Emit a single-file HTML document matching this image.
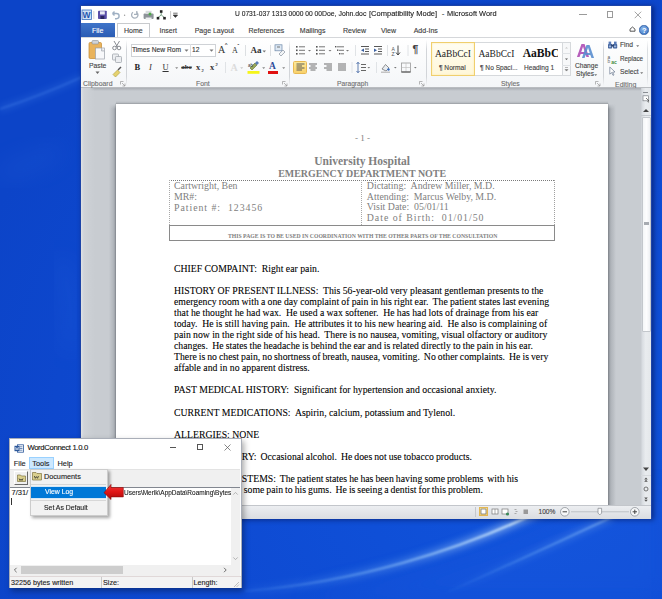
<!DOCTYPE html>
<html><head><meta charset="utf-8">
<style>
*{margin:0;padding:0;box-sizing:border-box}
html,body{width:662px;height:599px;overflow:hidden}
body{position:relative;background:#0a3fc4;font-family:"Liberation Sans",sans-serif}
.a{position:absolute}
.t{position:absolute;white-space:pre;line-height:1}
.ui{font-family:"Liberation Sans",sans-serif;color:#3c3c3c;-webkit-text-stroke:0.12px currentColor}
.s{font-family:"Liberation Serif",serif;font-size:9.75px;color:#000;-webkit-text-stroke:0.15px rgba(0,0,0,.6)}
.h{font-family:"Liberation Serif",serif;color:#808080}
.ser{font-family:"Liberation Serif",serif}
</style></head>
<body>
<!-- desktop streaks -->
<svg class="a" style="left:0;top:0" width="662" height="599">
 <defs>
  <radialGradient id="bg1" cx="0.8" cy="0.75" r="0.9"><stop offset="0" stop-color="#1054dc"/><stop offset="0.6" stop-color="#0e4ad2"/><stop offset="1" stop-color="#0c44c8"/></radialGradient>
  <linearGradient id="sg1" gradientUnits="userSpaceOnUse" x1="240" y1="0" x2="545" y2="0"><stop offset="0" stop-color="#7fc0ff" stop-opacity="0.1"/><stop offset="0.5" stop-color="#a8d8ff" stop-opacity="0.55"/><stop offset="0.85" stop-color="#d8f0ff" stop-opacity="0.95"/><stop offset="1" stop-color="#d8f0ff" stop-opacity="1"/></linearGradient>
  <linearGradient id="sg2" gradientUnits="userSpaceOnUse" x1="440" y1="0" x2="610" y2="0"><stop offset="0" stop-color="#7fc0ff" stop-opacity="0"/><stop offset="0.5" stop-color="#8cc8ff" stop-opacity="0.4"/><stop offset="1" stop-color="#b0dcff" stop-opacity="0.65"/></linearGradient>
  <filter id="bl3" x="-20%" y="-50%" width="140%" height="200%"><feGaussianBlur stdDeviation="3.5"/></filter>
  <filter id="bl1" x="-20%" y="-50%" width="140%" height="200%"><feGaussianBlur stdDeviation="1.1"/></filter>
  <filter id="bl6" x="-50%" y="-50%" width="200%" height="200%"><feGaussianBlur stdDeviation="12"/></filter>
 </defs>
 <rect width="662" height="599" fill="url(#bg1)"/>
 <path d="M300 599 Q 450 570 560 520 L 662 490 L 662 599 Z" fill="#1a5ae0" opacity="0.35" filter="url(#bl6)"/>
 <path d="M245 591 C 350 583, 460 552, 550 506" stroke="url(#sg1)" stroke-width="8" fill="none" opacity="0.45" filter="url(#bl3)"/>
 <path d="M245 591 C 350 583, 460 552, 550 506" stroke="url(#sg1)" stroke-width="2.2" fill="none" opacity="0.9" filter="url(#bl1)"/>
 <path d="M428 601 Q 520 560 612 517" stroke="url(#sg2)" stroke-width="6" fill="none" opacity="0.4" filter="url(#bl3)"/>
 <path d="M428 601 Q 520 560 612 517" stroke="url(#sg2)" stroke-width="1.6" fill="none" opacity="0.85" filter="url(#bl1)"/>
 <path d="M0 109 Q 40 96 82 77" stroke="#5a9af5" stroke-width="4" fill="none" opacity="0.3" filter="url(#bl3)"/>
 <path d="M0 109 Q 40 96 82 77" stroke="#6aa8ff" stroke-width="1.2" fill="none" opacity="0.35" filter="url(#bl1)"/>
 <path d="M0 175 Q 30 165 60 150" stroke="#3a78e8" stroke-width="14" fill="none" opacity="0.18" filter="url(#bl6)"/>
 <path d="M60 260 Q 75 300 70 350" stroke="#3a78e8" stroke-width="10" fill="none" opacity="0.25" filter="url(#bl6)"/>
</svg>
<!-- WORD WINDOW -->
<div class="a" style="left:79.6px;top:5px;width:572px;height:513.5px;background:#fff;border:1px solid #1d44a8;box-shadow:2px 1px 5px rgba(0,0,40,.45)"></div>
<!-- title -->
<div class="t ui" style="left:234.6px;top:10.3px;font-size:8px;color:#222;transform-origin:0 0;transform:scaleX(0.835)">U 0731-037 1313 0000 00 00</div>
<div class="t ui" style="left:322.4px;top:10.3px;font-size:8px;color:#222;transform-origin:0 0;transform:scaleX(0.86)">Doe, John.doc</div>
<div class="t ui" style="left:369.3px;top:10.3px;font-size:8px;color:#222;transform-origin:0 0;transform:scaleX(0.94)">[Compatibility Mode]</div>
<div class="t ui" style="left:441.8px;top:10.3px;font-size:8px;color:#222;transform-origin:0 0;">-</div>
<div class="t ui" style="left:447px;top:10.3px;font-size:8px;color:#222;transform-origin:0 0;transform:scaleX(0.925)">Microsoft Word</div>
<!-- tabs -->
<div class="a" style="left:81px;top:23.3px;width:33.5px;height:13.7px;background:linear-gradient(#3f74c9,#2b5cb4)"></div>
<div class="t ui" style="left:92px;top:26.5px;font-size:7px;color:#fff">File</div>
<div class="a" style="left:117.4px;top:23px;width:33px;height:15px;background:#fff;border:1px solid #c8cacd;border-bottom:none"></div>
<div class="t ui" style="left:124px;top:26.5px;font-size:7px">Home</div>
<div class="t ui" style="left:159.5px;top:26.5px;font-size:7px">Insert</div>
<div class="t ui" style="left:194.7px;top:26.5px;font-size:7px">Page Layout</div>
<div class="t ui" style="left:248.5px;top:26.5px;font-size:7px">References</div>
<div class="t ui" style="left:299.8px;top:26.5px;font-size:7px">Mailings</div>
<div class="t ui" style="left:343px;top:26.5px;font-size:7px">Review</div>
<div class="t ui" style="left:381px;top:26.5px;font-size:7px">View</div>
<div class="t ui" style="left:413.7px;top:26.5px;font-size:7px">Add-Ins</div>
<!-- ribbon -->
<div class="a" style="left:81px;top:37px;width:570px;height:51px;background:linear-gradient(#ffffff,#f4f6f8);border-top:1px solid #d5d7da;border-bottom:1px solid #b9bcc0"></div>
<!-- RIBBON CONTENT -->
<!-- QAT -->
<svg class="a" style="left:81px;top:9px" width="100" height="12">
 <rect x="1" y="1" width="9.5" height="9.5" fill="#cfe0f5" stroke="#3a6fbf" stroke-width="0.8"/>
 <text x="1.6" y="9.3" font-family="Liberation Sans" font-weight="bold" font-size="8.5" fill="#1f56b0">W</text>
 <line x1="12.8" y1="2" x2="12.8" y2="10" stroke="#c9c9c9" stroke-width="0.8"/>
 <rect x="17" y="1.8" width="8.8" height="8.2" rx="0.8" fill="#5a4fa8"/>
 <rect x="19" y="2.3" width="4.8" height="3.2" fill="#e9e9f5"/>
 <rect x="19.5" y="7" width="3.8" height="3" fill="#2a2460"/>
 <path d="M31.5 4.5 h4 a2.6 2.6 0 0 1 0 5.2 h-1.5 M31.5 4.5 l2 -2 M31.5 4.5 l2 2" fill="none" stroke="#9fb0c3" stroke-width="1.4"/>
 <circle cx="43.6" cy="6.2" r="0.7" fill="#9a9a9a"/>
 <path d="M52 3.3 a3.2 3.2 0 1 0 3.2 -0.2 M55.8 2 v3.3 h-2.8" fill="none" stroke="#a8b2bd" stroke-width="1.3"/>
 <rect x="62.6" y="4.5" width="10" height="5.5" rx="1" fill="#8d9399"/>
 <rect x="64.6" y="1.8" width="6" height="3.2" fill="#d8dcde"/>
 <rect x="64.6" y="8.5" width="6" height="2.5" fill="#eef0f1"/>
 <circle cx="69" cy="5" r="1.5" fill="#4fa84a"/>
 <path d="M80.2 3 V6 M77 8.5 L80.2 6 L83.5 8.5" stroke="#6f9a7a" stroke-width="0.9" fill="none"/>
 <rect x="78.9" y="1.2" width="2.6" height="2.6" fill="#222"/>
 <rect x="75.7" y="7.9" width="2.6" height="2.6" fill="#222"/>
 <rect x="82.2" y="7.9" width="2.6" height="2.6" fill="#222"/>
 <line x1="89.6" y1="2" x2="89.6" y2="10" stroke="#b9b9b9" stroke-width="0.8"/>
 <path d="M92.2 4.2 h4.4 M92.2 6 l2.2 2.4 l2.2 -2.4 z" stroke="#333" stroke-width="0.7" fill="#333"/>
</svg>
<!-- window controls -->
<div class="a" style="left:579px;top:14.3px;width:8px;height:0.9px;background:#9a9a9a"></div>
<div class="a" style="left:606.5px;top:11.3px;width:6.8px;height:6.8px;border:0.9px solid #9a9a9a"></div>
<svg class="a" style="left:633.5px;top:11px" width="8" height="8"><path d="M0.7 0.7 L7.2 7.2 M7.2 0.7 L0.7 7.2" stroke="#9a9a9a" stroke-width="0.9"/></svg>
<!-- ribbon min + help -->
<svg class="a" style="left:628.5px;top:26px" width="7" height="6"><path d="M1 5.2 v-2 l2.5 -2.2 l2.5 2.2 v2 z" fill="none" stroke="#444" stroke-width="0.9"/></svg>
<div class="a" style="left:639.4px;top:25.2px;width:9.4px;height:9.4px;border-radius:50%;background:radial-gradient(circle at 40% 35%,#8ab8ec,#3a72c2);border:0.5px solid #2d5fa8"></div>
<div class="t" style="left:642.1px;top:26.5px;font-size:7.4px;font-weight:bold;color:#fff;font-family:'Liberation Sans'">?</div>

<!-- ===== Clipboard group ===== -->
<svg class="a" style="left:87px;top:39px" width="20" height="22">
 <rect x="2" y="3.5" width="12.5" height="16" rx="1.2" fill="#e9b35c" stroke="#c48a2f" stroke-width="0.7"/>
 <rect x="5" y="1.5" width="6.5" height="3.5" rx="1" fill="#cfd3d8" stroke="#8a8f96" stroke-width="0.6"/>
 <rect x="8.5" y="9" width="9" height="11" fill="#f7f8fa" stroke="#9aa0a8" stroke-width="0.7"/>
 <path d="M14.5 9 v3 h3" fill="#dde1e6" stroke="#9aa0a8" stroke-width="0.6"/>
</svg>
<div class="t ui" style="left:89px;top:63px;font-size:6.8px;color:#444">Paste</div>
<svg class="a" style="left:94.5px;top:70.5px" width="5" height="4"><path d="M0.5 0.5 h4 l-2 2.5 z" fill="#666"/></svg>
<svg class="a" style="left:111px;top:40px" width="12" height="38">
 <path d="M3 1 l3.5 6 M8.5 1 l-3.5 6" stroke="#7c8087" stroke-width="0.9" fill="none"/>
 <circle cx="3.5" cy="8" r="1.8" fill="none" stroke="#7c8087" stroke-width="0.9"/>
 <circle cx="8" cy="8" r="1.8" fill="none" stroke="#7c8087" stroke-width="0.9"/>
 <rect x="1.5" y="14" width="6" height="6" rx="0.8" fill="#eceef1" stroke="#a2a7ad" stroke-width="0.8"/>
 <rect x="4.5" y="16.5" width="6" height="6" rx="0.8" fill="#eceef1" stroke="#a2a7ad" stroke-width="0.8"/>
 <path d="M2 34.5 l4.5 -4.5 l2.5 2.5 l-4.5 4.5 z" fill="#e6d26e" stroke="#a89a3a" stroke-width="0.6"/>
 <path d="M7 30 l3 -3" stroke="#555" stroke-width="1.4"/>
</svg>
<div class="t ui" style="left:83px;top:81.2px;font-size:6.9px;color:#707070">Clipboard</div>
<svg class="a" style="left:119.5px;top:81px" width="6" height="6"><path d="M0.5 0.5 h3 M0.5 0.5 v3 M2 2 l3 3 M5 2.5 v2.5 h-2.5" stroke="#8a8a8a" stroke-width="0.6" fill="none"/></svg>
<div class="a" style="left:126px;top:40px;width:1px;height:46px;background:linear-gradient(rgba(200,203,207,0),#d2d5d9 20%,#d2d5d9 80%,rgba(200,203,207,0))"></div>

<!-- ===== Font group ===== -->
<div class="a" style="left:130.5px;top:43.5px;width:85px;height:13px;background:#fff;border:1px solid #cfd2d6"></div>
<div class="a" style="left:189.5px;top:44px;width:1px;height:12px;background:#dcdfe2"></div>
<div class="t ui" style="left:132px;top:46.6px;font-size:6.66px;color:#333">Times New Rom</div>
<svg class="a" style="left:183.5px;top:49px" width="5" height="4"><path d="M0.5 0.5 h4 l-2 2.3 z" fill="#777"/></svg>
<div class="t ui" style="left:192px;top:46.6px;font-size:6.66px;color:#333">12</div>
<svg class="a" style="left:208.5px;top:49px" width="5" height="4"><path d="M0.5 0.5 h4 l-2 2.3 z" fill="#777"/></svg>
<div class="t ser" style="left:218px;top:44.5px;font-size:10px;color:#333">A</div>
<div class="t ui" style="left:225px;top:43px;font-size:5px;color:#333">^</div>
<div class="t ser" style="left:232px;top:46.5px;font-size:8px;color:#333">A</div>
<div class="t ui" style="left:237.5px;top:44px;font-size:5px;color:#333">ˇ</div>
<div class="a" style="left:245px;top:45px;width:1px;height:11px;background:#dcdfe2"></div>
<div class="t ser" style="left:250.5px;top:45.6px;font-size:9px;color:#333;font-weight:bold">Aa</div>
<svg class="a" style="left:261.5px;top:49.5px" width="5" height="4"><path d="M0.5 0.5 h3.5 l-1.75 2 z" fill="#777"/></svg>
<div class="a" style="left:269.5px;top:45px;width:1px;height:11px;background:#dcdfe2"></div>
<svg class="a" style="left:274px;top:44px" width="12" height="12">
 <rect x="1" y="0.8" width="7" height="6" fill="#dde8f3" stroke="#6d88a8" stroke-width="0.7"/>
 <path d="M3 3 h3" stroke="#555" stroke-width="0.8"/>
 <path d="M5 10 l4 -4 l2 2 l-4 4 z" fill="#f2f4f6" stroke="#8892a0" stroke-width="0.7"/>
</svg>
<!-- row 2 -->
<div class="t ser" style="left:134.5px;top:63px;font-size:8.5px;font-weight:bold;color:#222">B</div>
<div class="t ser" style="left:149px;top:63px;font-size:8.5px;font-style:italic;color:#333">I</div>
<div class="t ser" style="left:162.5px;top:63px;font-size:8.5px;color:#333;text-decoration:underline">U</div>
<svg class="a" style="left:174.5px;top:67px" width="4" height="3"><path d="M0.2 0.3 h3 l-1.5 1.8 z" fill="#888"/></svg>
<div class="t ser" style="left:181.3px;top:64.3px;font-size:7px;color:#333;text-decoration:line-through;font-weight:bold">abc</div>
<div class="t ser" style="left:196px;top:63px;font-size:8.5px;color:#333;font-weight:bold">x</div>
<div class="t ui" style="left:201.5px;top:68.5px;font-size:4px;color:#333">2</div>
<div class="t ser" style="left:210px;top:63px;font-size:8.5px;color:#333;font-weight:bold">x</div>
<div class="t ui" style="left:215.5px;top:62.5px;font-size:4px;color:#333">2</div>
<div class="a" style="left:225px;top:62px;width:1px;height:11px;background:#e0e3e6"></div>
<div class="t ser" style="left:230.5px;top:62.5px;font-size:10px;color:#dcdcdc;font-weight:bold">A</div>
<svg class="a" style="left:240px;top:67px" width="4" height="3"><path d="M0.2 0.3 h3 l-1.5 1.8 z" fill="#c8c8c8"/></svg>
<svg class="a" style="left:247px;top:60px" width="14" height="15">
 <path d="M3 8 l5 -5 l2 2 l-5 5 z" fill="#9aa75a" stroke="#5a6b2a" stroke-width="0.6"/>
 <path d="M8 3 l2 -2 l2 2 l-2 2" fill="#5a7db8"/>
 <text x="1" y="7" font-size="4.5" font-family="Liberation Sans" fill="#333">ab</text>
 <rect x="0.5" y="11" width="12" height="2.8" fill="#f5f51a"/>
</svg>
<svg class="a" style="left:262px;top:67px" width="4" height="3"><path d="M0.2 0.3 h3 l-1.5 1.8 z" fill="#888"/></svg>
<div class="t ser" style="left:269px;top:61.5px;font-size:9.5px;color:#2c4a9a;font-weight:bold">A</div>
<div class="a" style="left:268px;top:71px;width:10px;height:2.5px;background:#e01010"></div>
<svg class="a" style="left:281.5px;top:67px" width="4" height="3"><path d="M0.2 0.3 h3 l-1.5 1.8 z" fill="#888"/></svg>
<div class="t ui" style="left:196px;top:81.2px;font-size:6.9px;color:#707070">Font</div>
<svg class="a" style="left:282px;top:81px" width="6" height="6"><path d="M0.5 0.5 h3 M0.5 0.5 v3 M2 2 l3 3 M5 2.5 v2.5 h-2.5" stroke="#8a8a8a" stroke-width="0.6" fill="none"/></svg>
<div class="a" style="left:289px;top:40px;width:1px;height:46px;background:linear-gradient(rgba(200,203,207,0),#d2d5d9 20%,#d2d5d9 80%,rgba(200,203,207,0))"></div>

<!-- ===== Paragraph group ===== -->
<svg class="a" style="left:294px;top:44px" width="135" height="14">
 <g fill="#555"><rect x="2" y="2" width="1.6" height="1.6"/><rect x="2" y="5.5" width="1.6" height="1.6"/><rect x="2" y="9" width="1.6" height="1.6"/></g>
 <g stroke="#666" stroke-width="0.9"><path d="M5 2.8 h6 M5 6.3 h6 M5 9.8 h6"/></g>
 <path d="M14 6 h3 l-1.5 1.6 z" fill="#777"/>
 <g fill="#555"><rect x="22" y="2" width="1.6" height="1.6"/><rect x="22" y="5.5" width="1.6" height="1.6"/><rect x="22" y="9" width="1.6" height="1.6"/></g>
 <g stroke="#666" stroke-width="0.9"><path d="M25 2.8 h6 M25 6.3 h6 M25 9.8 h6"/></g>
 <path d="M34.5 6 h3 l-1.5 1.6 z" fill="#777"/>
 <g stroke="#666" stroke-width="0.9"><path d="M43 2.8 h7 M45 6.3 h5 M47 9.8 h3"/></g>
 <g fill="#555"><rect x="41" y="2" width="1.4" height="1.4"/><rect x="43" y="5.5" width="1.4" height="1.4"/><rect x="45" y="9" width="1.4" height="1.4"/></g>
 <path d="M52 6 h3 l-1.5 1.6 z" fill="#777"/>
 <line x1="61.5" y1="1" x2="61.5" y2="12" stroke="#dde0e3" stroke-width="0.9"/>
 <g stroke="#444" stroke-width="0.9"><path d="M67 2.5 h8 M71 5 h4 M71 7.5 h4 M67 10 h8"/></g>
 <path d="M70 4.5 l-3 1.8 l3 1.8 z" fill="#3a5fa0"/>
 <g stroke="#444" stroke-width="0.9"><path d="M80 2.5 h8 M84 5 h4 M84 7.5 h4 M80 10 h8"/></g>
 <path d="M80 4.5 l3 1.8 l-3 1.8 z" fill="#3a5fa0"/>
 <line x1="93.5" y1="1" x2="93.5" y2="12" stroke="#dde0e3" stroke-width="0.9"/>
 <text x="97.5" y="7" font-size="5" font-family="Liberation Sans" fill="#555">A</text>
 <text x="97.5" y="12.3" font-size="5" font-family="Liberation Sans" fill="#555">Z</text>
 <path d="M104 1.5 v9 M102 8.5 l2 2.5 l2 -2.5" stroke="#333" stroke-width="0.9" fill="none"/>
 <line x1="114" y1="1" x2="114" y2="12" stroke="#dde0e3" stroke-width="0.9"/>
 <text x="118.5" y="9.3" font-size="10.5" font-weight="bold" font-family="Liberation Sans" fill="#444">¶</text>
</svg>
<div class="a" style="left:292.5px;top:61px;width:14px;height:12.5px;background:linear-gradient(#fde99a,#f8d16b);border:1px solid #e8b952;border-radius:1.5px"></div>
<svg class="a" style="left:294px;top:60px" width="135" height="15">
 <g stroke="#555" stroke-width="0.95"><path d="M2.5 4 h8 M2.5 6 h5.5 M2.5 8 h8 M2.5 10 h5.5"/></g>
 <g stroke="#666" stroke-width="0.95"><path d="M15 4 h8 M16.5 6 h5 M15 8 h8 M16.5 10 h5"/></g>
 <g stroke="#666" stroke-width="0.95"><path d="M30 4 h8 M32.5 6 h5.5 M30 8 h8 M32.5 10 h5.5"/></g>
 <g stroke="#666" stroke-width="0.95"><path d="M44 4 h8 M44 6 h8 M44 8 h8 M44 10 h8"/></g>
 <line x1="58" y1="2" x2="58" y2="13" stroke="#dde0e3" stroke-width="0.9"/>
 <path d="M64 2.5 v10 M62.5 4 l1.5 -1.8 l1.5 1.8 M62.5 11 l1.5 1.8 l1.5 -1.8" stroke="#3a5fa0" stroke-width="0.8" fill="none"/>
 <g stroke="#555" stroke-width="0.9"><path d="M67 4.5 h5 M67 7.5 h5 M67 10.5 h5"/></g>
 <path d="M73.5 7 h2.6 l-1.3 1.5 z" fill="#777"/>
 <line x1="82.5" y1="2" x2="82.5" y2="13" stroke="#dde0e3" stroke-width="0.9"/>
 <path d="M88 9 l3.5 -4.5 l3.5 3.5 l-3 3 z" fill="#e8ecf0" stroke="#666" stroke-width="0.7"/>
 <circle cx="94.5" cy="9.5" r="1.2" fill="#3a6fbf"/>
 <rect x="87" y="11.5" width="9" height="1.5" fill="#c4c4c4"/>
 <path d="M100 7 h2.6 l-1.3 1.5 z" fill="#777"/>
 <rect x="107.5" y="3" width="9" height="9" fill="none" stroke="#9a9a9a" stroke-width="0.8"/>
 <path d="M112 3 v9 M107.5 7.5 h9" stroke="#b9b9b9" stroke-width="0.6"/>
 <path d="M107.5 12 h9" stroke="#444" stroke-width="1"/>
 <path d="M120 7 h2.6 l-1.3 1.5 z" fill="#777"/>
</svg>
<div class="t ui" style="left:337px;top:81.2px;font-size:6.7px;color:#707070">Paragraph</div>
<svg class="a" style="left:419px;top:81px" width="6" height="6"><path d="M0.5 0.5 h3 M0.5 0.5 v3 M2 2 l3 3 M5 2.5 v2.5 h-2.5" stroke="#8a8a8a" stroke-width="0.6" fill="none"/></svg>
<div class="a" style="left:426px;top:40px;width:1px;height:46px;background:linear-gradient(rgba(200,203,207,0),#d2d5d9 20%,#d2d5d9 80%,rgba(200,203,207,0))"></div>

<!-- ===== Styles group ===== -->
<div class="a" style="left:431px;top:41.5px;width:140px;height:34.5px;background:#fff;border:1px solid #d6d9dc"></div>
<div class="a" style="left:431px;top:41.5px;width:43.6px;height:34.5px;background:linear-gradient(#fffdf2,#fff7d9);border:1.5px solid #f0cf6e;box-shadow:inset 0 0 2px #fbe7a6"></div>
<div class="t ser" style="left:435px;top:50.2px;font-size:9.5px;color:#222">AaBbCcI</div>
<div class="t ui" style="left:439px;top:65.2px;font-size:6.6px;color:#444">¶ Normal</div>
<div class="t ser" style="left:478.5px;top:50.2px;font-size:9.5px;color:#222">AaBbCcI</div>
<div class="t ui" style="left:480px;top:65.2px;font-size:6.6px;color:#444">¶ No Spaci...</div>
<div class="a" style="left:522px;top:46px;width:35.5px;height:14px;overflow:hidden"><div class="t ser" style="left:0.7px;top:1.5px;font-size:11.6px;color:#111;font-weight:bold">AaBbC</div></div>
<div class="t ui" style="left:524px;top:65.2px;font-size:6.6px;color:#444">Heading 1</div>
<div class="a" style="left:562px;top:41.5px;width:9px;height:34.5px;background:#f7f8f9;border:1px solid #d6d9dc"></div>
<div class="a" style="left:562px;top:53px;width:9px;height:1px;background:#dfe2e5"></div>
<div class="a" style="left:562px;top:64.5px;width:9px;height:1px;background:#dfe2e5"></div>
<svg class="a" style="left:562px;top:42px" width="9" height="34">
 <path d="M3 6.5 h3 l-1.5 -1.6 z" fill="#c8c8c8"/>
 <path d="M3 16.5 h3 l-1.5 1.6 z" fill="#555"/>
 <path d="M3 25.5 h3 M3 27.5 h3 l-1.5 1.6 z" fill="#777" stroke="#777" stroke-width="0.5"/>
</svg>
<svg class="a" style="left:575px;top:39px" width="24" height="21">
 <text x="1.5" y="17.5" font-size="18" font-family="Liberation Sans" font-weight="bold" fill="#b356b8" opacity="0.95">A</text>
 <text x="6.5" y="19" font-size="18" font-family="Liberation Sans" font-weight="bold" fill="#5b8fd0" opacity="0.9">A</text>
</svg>
<div class="t ui" style="left:575px;top:62.8px;font-size:6.6px;color:#444">Change</div>
<div class="t ui" style="left:576px;top:71.3px;font-size:6.6px;color:#444">Styles</div>
<svg class="a" style="left:594px;top:74px" width="4" height="3"><path d="M0.2 0.3 h3 l-1.5 1.8 z" fill="#777"/></svg>
<div class="t ui" style="left:501px;top:81.2px;font-size:6.9px;color:#707070">Styles</div>
<svg class="a" style="left:595px;top:81px" width="6" height="6"><path d="M0.5 0.5 h3 M0.5 0.5 v3 M2 2 l3 3 M5 2.5 v2.5 h-2.5" stroke="#8a8a8a" stroke-width="0.6" fill="none"/></svg>
<div class="a" style="left:602.5px;top:40px;width:1px;height:46px;background:linear-gradient(rgba(200,203,207,0),#d2d5d9 20%,#d2d5d9 80%,rgba(200,203,207,0))"></div>

<!-- ===== Editing group ===== -->
<svg class="a" style="left:607px;top:40px" width="12" height="37">
 <rect x="1" y="4" width="4.2" height="4.6" rx="0.8" fill="#3e5f99"/>
 <rect x="6" y="4" width="4.2" height="4.6" rx="0.8" fill="#3e5f99"/>
 <rect x="1.6" y="1.6" width="2.6" height="3" fill="#5a7cb8"/>
 <rect x="7" y="1.6" width="2.6" height="3" fill="#5a7cb8"/>
 <rect x="4" y="4.6" width="3.2" height="2" fill="#27406e"/>
 <rect x="1.8" y="5.5" width="2.4" height="1.8" fill="#9fb8df"/>
 <rect x="6.9" y="5.5" width="2.4" height="1.8" fill="#9fb8df"/>
 <text x="0.6" y="19" font-size="4.8" font-family="Liberation Sans" fill="#555">a</text>
 <text x="0.6" y="23" font-size="4.8" font-family="Liberation Sans" fill="#666">b</text>
 <text x="4.2" y="23.5" font-size="5" font-family="Liberation Sans" font-weight="bold" fill="#3c8a3a">ac</text>
 <path d="M2.8 27 v7.2 l1.8 -1.6 l1.4 2.8 l1 -0.5 l-1.4 -2.7 l2.4 -0.2 z" fill="#fff" stroke="#6a7a90" stroke-width="0.7"/>
</svg>
<div class="a" style="left:646.5px;top:40px;width:1px;height:46px;background:linear-gradient(rgba(200,203,207,0),#dcdfe2 20%,#dcdfe2 80%,rgba(200,203,207,0))"></div>
<div class="t ui" style="left:620px;top:41.8px;font-size:6.7px;color:#444">Find</div>
<svg class="a" style="left:635.5px;top:44.5px" width="4" height="3"><path d="M0.2 0.3 h3 l-1.5 1.8 z" fill="#777"/></svg>
<div class="t ui" style="left:620px;top:56.3px;font-size:6.3px;color:#444">Replace</div>
<div class="t ui" style="left:620px;top:69.2px;font-size:6.7px;color:#444">Select</div>
<svg class="a" style="left:640px;top:72px" width="4" height="3"><path d="M0.2 0.3 h3 l-1.5 1.8 z" fill="#777"/></svg>
<div class="t ui" style="left:615px;top:81.2px;font-size:7px;color:#707070">Editing</div>

<!-- /RIBBON CONTENT -->
<!-- doc area -->
<div class="a" style="left:81px;top:88px;width:560px;height:417px;background:#c8ccd1"></div>
<div class="a" style="left:81px;top:88px;width:560px;height:3px;background:linear-gradient(#a9adb3,rgba(200,204,209,0))"></div>
<div class="a" style="left:80.6px;top:88px;width:14px;height:417px;background:linear-gradient(90deg,#dfe2e6,#d0d3d8 20%,#cbcfd4 60%,rgba(200,204,209,0))"></div>

<div class="a" style="left:109px;top:104px;width:7px;height:401px;background:linear-gradient(90deg,rgba(150,155,162,0),rgba(150,155,162,.5) 70%,rgba(120,125,132,.8));-webkit-mask-image:linear-gradient(rgba(0,0,0,0),#000 5px)"></div>
<div class="a" style="left:608px;top:104px;width:8px;height:401px;background:linear-gradient(90deg,rgba(120,125,132,.85),rgba(150,155,162,.5) 35%,rgba(150,155,162,0));-webkit-mask-image:linear-gradient(rgba(0,0,0,0),#000 5px)"></div>
<div class="a" style="left:116px;top:101px;width:492px;height:3px;background:linear-gradient(rgba(150,155,162,0),rgba(140,145,152,.5))"></div>
<div class="a" style="left:116px;top:104px;width:492px;height:401px;background:#fff;box-shadow:0 0 0 0.5px rgba(120,125,130,.45)"></div>
<!-- v scrollbar -->
<div class="a" style="left:640.5px;top:88px;width:10.5px;height:417px;background:linear-gradient(90deg,#d7dbe0,#e9ecef 40%,#e4e7ea);border-left:1px solid #d0d4d9"></div>
<div class="a" style="left:643px;top:92.2px;width:5px;height:1px;background:#8a8e94"></div>
<svg class="a" style="left:641.5px;top:95px" width="9" height="8"><rect x="1" y="0.8" width="5.5" height="5" fill="#fff" stroke="#7a7f86" stroke-width="0.7"/><path d="M4 3 l3 3 l-1.2 0.2 l0.6 1.3" stroke="#444" stroke-width="0.7" fill="none"/></svg>
<svg class="a" style="left:642px;top:108px" width="8" height="5"><path d="M1 4 h6 l-3 -3 z" fill="#444"/></svg>
<div class="a" style="left:641px;top:115px;width:10px;height:1px;background:#c5c9ce"></div>
<div class="a" style="left:641.5px;top:116.5px;width:9px;height:215.5px;background:linear-gradient(90deg,#f4f6f8,#fdfdfe 50%,#eef0f3);border:1px solid #c3c7cc;border-radius:1px"></div>
<div class="a" style="left:643.5px;top:222px;width:5px;height:3px;background:#a7abb1"></div>
<svg class="a" style="left:642px;top:466px" width="8" height="38">
 <path d="M1 1.5 h6 l-3 3.5 z" fill="#444"/>
 <path d="M2.2 13.5 h3.6 l-1.8 -2 z M2.2 15.8 h3.6 l-1.8 -2 z" fill="#555"/>
 <circle cx="4" cy="23" r="2" fill="none" stroke="#555" stroke-width="0.8"/>
 <path d="M2.2 31.5 h3.6 l-1.8 2 z M2.2 33.8 h3.6 l-1.8 2 z" fill="#555"/>
</svg>
<div class="a" style="left:641px;top:474.5px;width:10px;height:1px;background:#d6d9dd"></div>
<!-- status bar -->
<div class="a" style="left:80.6px;top:505px;width:570px;height:13.5px;background:linear-gradient(#eceef1,#dadde1);border-top:1px solid #c3c6cb"></div>
<div class="a" style="left:474.5px;top:507px;width:1px;height:10px;background:#c4c7cb"></div>
<div class="a" style="left:478.8px;top:507.3px;width:9.6px;height:9px;background:linear-gradient(#fde9a0,#f7d57a);border:1px solid #e3b652"></div>
<svg class="a" style="left:478px;top:506px" width="60" height="12">
 <rect x="3" y="3" width="5" height="5" fill="#fff" stroke="#666" stroke-width="0.7"/>
 <rect x="14" y="3" width="6" height="5" fill="#fff" stroke="#777" stroke-width="0.7"/><path d="M17 3 v5" stroke="#777" stroke-width="0.6"/>
 <rect x="24" y="3" width="6" height="5" fill="#fff" stroke="#777" stroke-width="0.7"/><circle cx="29.5" cy="8" r="1.6" fill="#3c8a5a"/>
 <path d="M36.5 3.5 h2 M37.5 5.5 h2 M36.5 7.5 h2" stroke="#999" stroke-width="0.8"/>
 <rect x="45.5" y="3.5" width="4.5" height="4.5" fill="#999"/>
</svg>
<div class="t ui" style="left:538.5px;top:508.5px;font-size:6.6px;color:#444">100%</div>
<svg class="a" style="left:559px;top:506px" width="82" height="12">
 <circle cx="5.8" cy="5.8" r="4.3" fill="#f7f8f9" stroke="#8d9298" stroke-width="0.8"/>
 <path d="M3.6 5.8 h4.4" stroke="#444" stroke-width="1"/>
 <path d="M12 5.8 h58" stroke="#b9bdc2" stroke-width="0.9"/>
 <path d="M39 2.3 h3.6 v4.8 l-1.8 1.8 l-1.8 -1.8 z" fill="#fafbfc" stroke="#7f848a" stroke-width="0.7"/>
 <circle cx="75.8" cy="5.8" r="4.3" fill="#f7f8f9" stroke="#8d9298" stroke-width="0.8"/>
 <path d="M73.6 5.8 h4.4 M75.8 3.6 v4.4" stroke="#444" stroke-width="1"/>
</svg>

<!-- PAGE HEADER -->
<div class="t h" style="left:355px;top:133.5px;font-size:9.1px">- 1 -</div>
<div class="t h" style="left:314.3px;top:156px;font-size:11.52px;font-weight:bold">University Hospital</div>
<div class="t h" style="left:278.2px;top:168.5px;font-size:9.95px;font-weight:bold">EMERGENCY DEPARTMENT NOTE</div>
<!-- table -->
<div class="a" style="left:169px;top:180px;width:386px;height:1px;background:repeating-linear-gradient(90deg,#7a7a7a 0 1px,rgba(255,255,255,0) 1px 2px)"></div>
<div class="a" style="left:169px;top:180px;width:1px;height:45px;background:repeating-linear-gradient(#a8a8a8 0 1px,rgba(255,255,255,0) 1px 2px)"></div>
<div class="a" style="left:361px;top:180px;width:1px;height:45px;background:repeating-linear-gradient(#a8a8a8 0 1px,rgba(255,255,255,0) 1px 2px)"></div>
<div class="a" style="left:554px;top:180px;width:1px;height:45px;background:repeating-linear-gradient(#a0a0a0 0 1px,rgba(255,255,255,0) 1px 2px)"></div>
<div class="a" style="left:169px;top:225px;width:386px;height:1px;background:#8a8a8a"></div>
<div class="a" style="left:169px;top:225px;width:1px;height:15.5px;background:#8a8a8a"></div>
<div class="a" style="left:554px;top:225px;width:1px;height:15.5px;background:#8a8a8a"></div>
<div class="a" style="left:169px;top:240px;width:386px;height:1px;background:#8a8a8a"></div>
<div class="t h" style="left:174px;top:181px;font-size:9.85px">Cartwright, Ben</div>
<div class="t h" style="left:174px;top:191.5px;font-size:9.85px">MR#:</div>
<div class="t h" style="left:174px;top:202.5px;font-size:9.85px;letter-spacing:0.96px">Patient #:  123456</div>
<div class="t h" style="left:366.8px;top:180.6px;font-size:9.85px">Dictating:  Andrew Miller, M.D.</div>
<div class="t h" style="left:366.8px;top:191.5px;font-size:9.85px">Attending:  Marcus Welby, M.D.</div>
<div class="t h" style="left:366.8px;top:202.3px;font-size:9.85px">Visit Date:  05/01/11</div>
<div class="t h" style="left:366.8px;top:213.2px;font-size:9.85px;letter-spacing:0.96px">Date of Birth:  01/01/50</div>
<div class="t h" style="left:228px;top:233.5px;font-size:5.73px;font-weight:bold;color:#808080">THIS PAGE IS TO BE USED IN COORDINATION WITH THE OTHER PARTS OF THE CONSULTATION</div>

<!-- BODY -->
<div class="t s" style="left:174px;top:263.70px">CHIEF COMPAINT:  Right ear pain.</div>
<div class="t s" style="left:174px;top:285.84px;word-spacing:-0.083px">HISTORY OF PRESENT ILLNESS:  This 56-year-old very pleasant gentleman presents to the</div>
<div class="t s" style="left:174px;top:296.91px;word-spacing:-0.244px">emergency room with a one day complaint of pain in his right ear.  The patient states last evening</div>
<div class="t s" style="left:174px;top:307.98px;word-spacing:-0.095px">that he thought he had wax.  He used a wax softener.  He has had lots of drainage from his ear</div>
<div class="t s" style="left:174px;top:319.05px;word-spacing:-0.095px">today.  He is still having pain.  He attributes it to his new hearing aid.  He also is complaining of</div>
<div class="t s" style="left:174px;top:330.12px;word-spacing:-0.144px">pain now in the right side of his head.  There is no nausea, vomiting, visual olfactory or auditory</div>
<div class="t s" style="left:174px;top:341.19px;word-spacing:-0.279px">changes.  He states the headache is behind the ear and is related directly to the pain in his ear.</div>
<div class="t s" style="left:174px;top:352.26px;word-spacing:-0.433px">There is no chest pain, no shortness of breath, nausea, vomiting.  No other complaints.  He is very</div>
<div class="t s" style="left:174px;top:363.33px">affable and in no apparent distress.</div>
<div class="t s" style="left:174px;top:385.47px">PAST MEDICAL HISTORY:  Significant for hypertension and occasional anxiety.</div>
<div class="t s" style="left:174px;top:407.61px">CURRENT MEDICATIONS:  Aspirin, calcium, potassium and Tylenol.</div>
<div class="t s" style="left:174px;top:429.75px">ALLERGIES: NONE</div>
<div class="t s" style="left:241.7px;top:451.89px;word-spacing:-0.440px">RY:  Occasional alcohol.  He does not use tobacco products.</div>
<div class="t s" style="left:241.8px;top:474.03px;word-spacing:-0.423px">STEMS:  The patient states he has been having some problems  with his</div>
<div class="t s" style="left:243.8px;top:485.10px;word-spacing:-0.462px">some pain to his gums.  He is seeing a dentist for this problem.</div>

<!-- WORDCONNECT -->
<div class="a" style="left:9px;top:438.3px;width:232.5px;height:150px;background:#fff;border:1px solid #a9aeb8;box-shadow:2px 3px 6px rgba(0,0,0,.35)"></div>
<svg class="a" style="left:14px;top:443.5px" width="10" height="9">
 <rect x="3.5" y="0.8" width="6" height="7.4" fill="#fff" stroke="#2b579a" stroke-width="0.8"/>
 <path d="M5.5 2.8 h3 M5.5 4.5 h3 M5.5 6.2 h3" stroke="#2b579a" stroke-width="0.7"/>
 <rect x="0.5" y="1.8" width="5" height="5.4" fill="#2b579a"/>
 <path d="M1.3 3 l0.8 3 l0.9 -2.3 l0.9 2.3 l0.8 -3" stroke="#fff" stroke-width="0.55" fill="none"/>
</svg>
<div class="t ui" style="left:27.4px;top:444.3px;font-size:7.7px;color:#111;letter-spacing:-0.33px">WordConnect 1.0.0</div>
<div class="a" style="left:169.5px;top:447px;width:6.5px;height:0.8px;background:#555"></div>
<div class="a" style="left:196.8px;top:444.3px;width:6px;height:6px;border:0.7px solid #555"></div>
<svg class="a" style="left:224px;top:444px" width="7" height="7"><path d="M0.5 0.5 L6.5 6.5 M6.5 0.5 L0.5 6.5" stroke="#555" stroke-width="0.7"/></svg>
<!-- menu bar -->
<div class="a" style="left:29.3px;top:457px;width:24.4px;height:12px;background:#cce8ff;border:1px solid #99d1ff"></div>
<div class="t ui" style="left:13.8px;top:459.6px;font-size:7.4px;color:#222">File</div>
<div class="t ui" style="left:32.3px;top:459.6px;font-size:7.4px;color:#222">Tools</div>
<div class="t ui" style="left:57.5px;top:459.6px;font-size:7.4px;color:#222">Help</div>
<!-- toolbar -->
<div class="a" style="left:10px;top:469.2px;width:230px;height:18.3px;background:#f0f0f0;border-top:1px solid #e3e3e3"></div>
<div class="a" style="left:13.8px;top:471.3px;width:14.2px;height:13.4px;background:#f0f0f0;border:1px solid;border-color:#fff #696969 #696969 #fff"></div>
<svg class="a" style="left:16.5px;top:474px" width="9" height="8">
 <path d="M0.5 1 h3 l1 1 h4 v5.5 h-8 z" fill="#d9cf8e" stroke="#7f7440" stroke-width="0.7"/>
 <path d="M2 4.5 l1 2 l1 -1.5 l1 1.5 l1 -2" stroke="#222" stroke-width="0.7" fill="none"/>
</svg>
<!-- list -->
<div class="a" style="left:10px;top:487.2px;width:230px;height:1px;background:#828790"></div>
<div class="t ui" style="left:11.5px;top:488.6px;font-size:7.5px;color:#222">7/31/</div>
<div class="a" style="left:11px;top:497.5px;width:1.2px;height:7px;background:#333"></div>
<div class="a" style="left:124px;top:488px;width:106.8px;height:12px;overflow:hidden"><div class="t ui" style="left:0;top:0.6px;font-size:7.6px;color:#222;transform-origin:0 0;transform:scaleX(0.853)">Users\Merik\AppData\Roaming\Bytes</div></div>
<div class="a" style="left:230.8px;top:488.2px;width:9.2px;height:77.2px;background:#f0f0f0"></div>
<svg class="a" style="left:231px;top:490px" width="9" height="72">
 <path d="M2.3 4.6 l2.2 -2.2 l2.2 2.2" stroke="#a3a3a3" stroke-width="0.8" fill="none"/>
 <path d="M2.3 67.4 l2.2 2.2 l2.2 -2.2" stroke="#a3a3a3" stroke-width="0.8" fill="none"/>
</svg>
<!-- h scroll -->
<div class="a" style="left:10px;top:565.4px;width:230px;height:11.2px;background:#f0f0f0"></div>
<div class="a" style="left:21px;top:565.6px;width:101.8px;height:8.2px;background:#cdcdcd"></div>
<svg class="a" style="left:12px;top:566px" width="220" height="8">
 <path d="M4.6 1.8 l-2.2 2.2 l2.2 2.2" stroke="#606060" stroke-width="0.9" fill="none"/>
 <path d="M212 1.8 l2.2 2.2 l-2.2 2.2" stroke="#606060" stroke-width="0.9" fill="none"/>
</svg>
<!-- status -->
<div class="a" style="left:10px;top:576.3px;width:230.5px;height:11.7px;background:#f3f3f3;border-top:1px solid #e0d8d8"></div>
<div class="a" style="left:100.8px;top:577px;width:1px;height:11px;background:#c9c9c9"></div>
<div class="a" style="left:192.4px;top:577px;width:1px;height:11px;background:#c9c9c9"></div>
<div class="t ui" style="left:11px;top:579.2px;font-size:7.2px;color:#222">32256 bytes written</div>
<div class="t ui" style="left:103px;top:579.2px;font-size:7.2px;color:#222">Size:</div>
<div class="t ui" style="left:193.5px;top:579.2px;font-size:7.2px;color:#222">Length:</div>
<svg class="a" style="left:231px;top:579px" width="9" height="9"><path d="M8 3 L3 8 M8 5.5 L5.5 8" stroke="#b0b0b0" stroke-width="0.8"/></svg>
<!-- dropdown -->
<div class="a" style="left:29.5px;top:468.8px;width:78.5px;height:47px;background:#f2f2f2;border:1px solid #cccccc;box-shadow:2px 2px 3px rgba(0,0,0,.35)"></div>
<svg class="a" style="left:32px;top:471px" width="10" height="10">
 <path d="M0.5 1.5 h3.5 l1 1 h4.5 v6.5 h-9 z" fill="#d9cf8e" stroke="#7f7440" stroke-width="0.7"/>
 <path d="M2.3 5 l1 2.3 l1.1 -1.7 l1.1 1.7 l1 -2.3" stroke="#222" stroke-width="0.7" fill="none"/>
</svg>
<div class="t ui" style="left:43.9px;top:473.1px;font-size:7.3px;color:#222">Documents</div>
<div class="a" style="left:31px;top:484.4px;width:75px;height:1px;background:#d7d7d7"></div>
<div class="a" style="left:31px;top:486px;width:75px;height:12.8px;background:#d5e8f7"></div>
<div class="a" style="left:31px;top:487px;width:75px;height:10.8px;background:#0078d7"></div>
<div class="t ui" style="left:44.6px;top:488.9px;font-size:7.1px;color:#fff;transform-origin:0 0;transform:scaleX(0.97)">View Log</div>
<div class="a" style="left:31px;top:500px;width:75px;height:1px;background:#d7d7d7"></div>
<div class="t ui" style="left:43.9px;top:505.4px;font-size:7.1px;color:#222;transform-origin:0 0;transform:scaleX(0.97)">Set As Default</div>
<!-- red arrow -->
<svg class="a" style="left:102px;top:482px" width="24" height="20">
 <defs><linearGradient id="rg" x1="0" y1="0" x2="0" y2="1"><stop offset="0" stop-color="#f23a3a"/><stop offset="0.5" stop-color="#e01515"/><stop offset="1" stop-color="#a80a0a"/></linearGradient></defs>
 <path d="M2 10.7 L9 2.4 V5.5 H21.3 V14.9 H9 V17.5 Z" fill="url(#rg)" stroke="#8a0808" stroke-width="0.6"/>
</svg>

</body></html>
